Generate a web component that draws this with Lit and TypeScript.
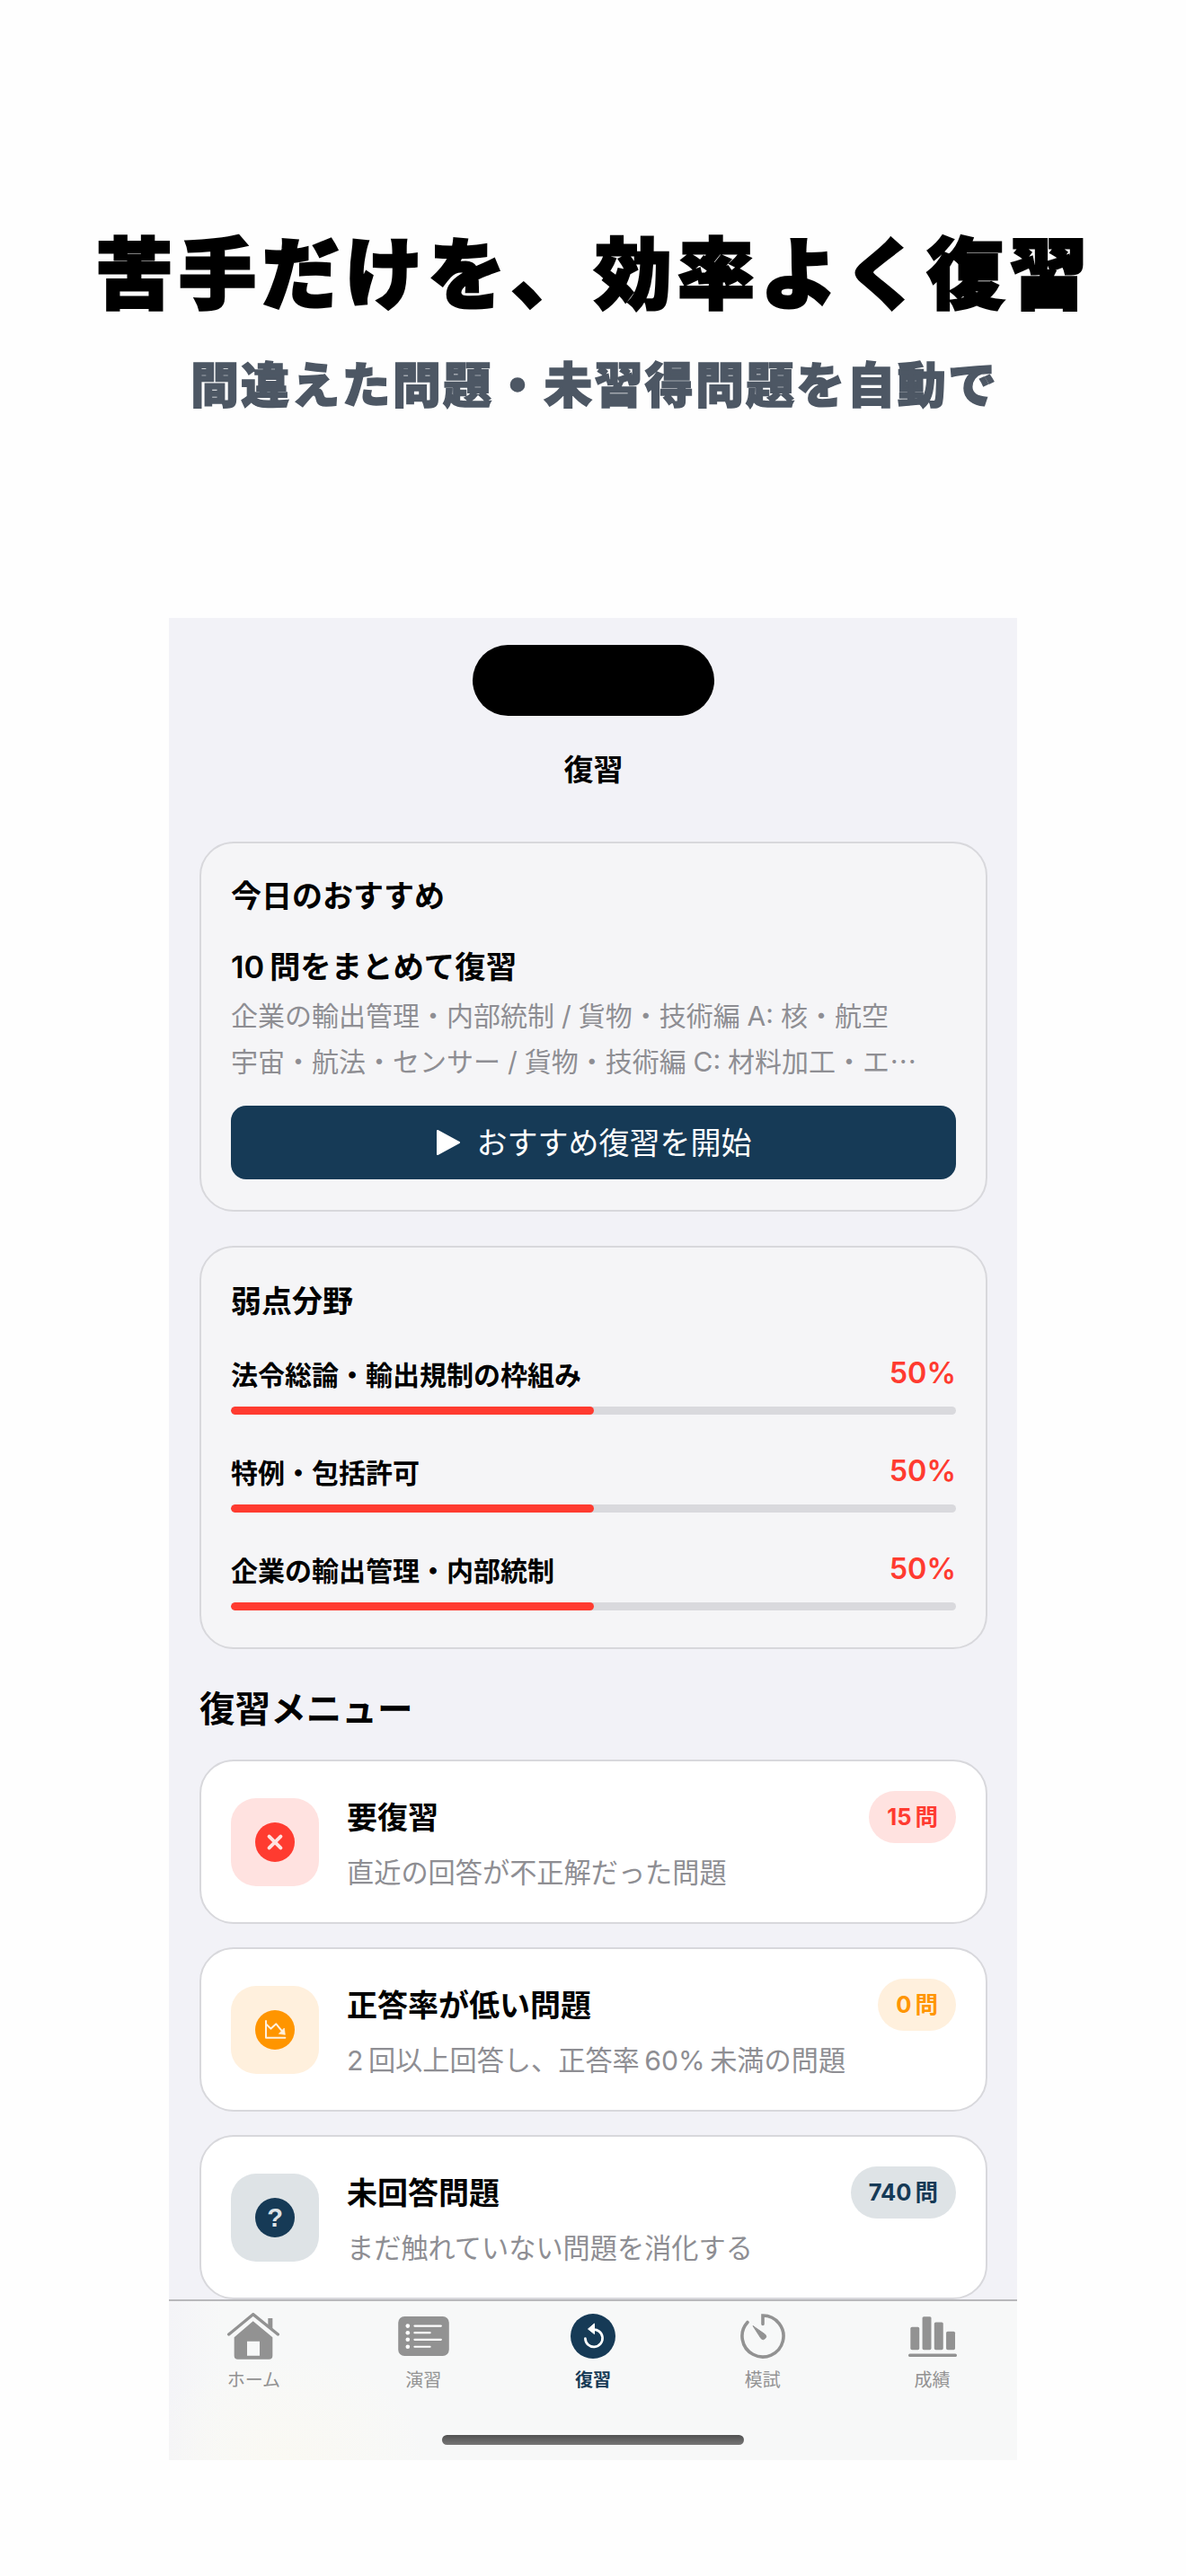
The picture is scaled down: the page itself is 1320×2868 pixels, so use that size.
import { LitElement, html, css, svg } from "lit";
import { customElement } from "lit/decorators.js";

const weak = [
  { name: "法令総論・輸出規制の枠組み", pct: 50 },
  { name: "特例・包括許可", pct: 50 },
  { name: "企業の輸出管理・内部統制", pct: 50 },
];

const homeIcon = html`<svg class="i-home" viewBox="67 15 174 156" aria-hidden="true">
  <path d="M203 33 h15 v42 l-15 -13z" fill="currentColor"/>
  <path d="M72 87 L153 20 L236 87" fill="none" stroke="currentColor" stroke-width="10" stroke-linecap="round" stroke-linejoin="round"/>
  <path fill-rule="evenodd" fill="currentColor" d="M153 43 L218 97 V158 Q218 170 206 170 H102 Q90 170 90 158 V97 Z M133 110 V158 H175 V110 Z"/>
</svg>`;

const listIcon = html`<svg class="i-list" viewBox="636 25 171 133" aria-hidden="true">
  <rect x="636" y="25" width="171" height="133" rx="21" fill="currentColor"/>
  <g fill="#fff"><circle cx="668" cy="57" r="7"/><circle cx="668" cy="80" r="7"/><circle cx="668" cy="103" r="7"/><circle cx="668" cy="127" r="7"/></g>
  <g stroke="#fff" stroke-width="6.5" stroke-linecap="round"><path d="M691 57H780M691 80H743M691 103H780M691 127H743"/></g>
</svg>`;

const reviewIcon = html`<svg class="i-round" viewBox="-25 -25 50 50" aria-hidden="true">
  <circle r="25" fill="currentColor"/>
  <path d="M-1.5 -8.2 A9.6 9.6 0 1 1 -9.6 1.6" transform="translate(1 1)" fill="none" stroke="#fff" stroke-width="2.7" stroke-linecap="round"/>
  <path d="M1.5 -14 L-5.5 -8 L1.5 -2.4 Z" fill="#fff" stroke="#fff" stroke-width="1" stroke-linejoin="round"/>
</svg>`;

const timerIcon = html`<svg class="i-round" viewBox="-25 -25 50 50" aria-hidden="true">
  <path d="M0 -13.5 V-23 A23 23 0 1 1 -17 -15.5" fill="none" stroke="currentColor" stroke-width="3.6" stroke-linecap="round"/>
  <path d="M-11 -11.5 L2.6 -2 A2.9 2.9 0 0 1 -2 2.6 Z" fill="currentColor" stroke="currentColor" stroke-width="1" stroke-linejoin="round"/>
</svg>`;

const chartIcon = html`<svg class="i-chart" viewBox="1200 25 163 135" aria-hidden="true">
  <g fill="currentColor">
    <rect x="1207" y="60" width="30" height="77" rx="5"/>
    <rect x="1247" y="25" width="30" height="112" rx="5"/>
    <rect x="1287" y="44" width="30" height="93" rx="5"/>
    <rect x="1327" y="75" width="30" height="62" rx="5"/>
    <rect x="1200" y="150" width="163" height="10.5" rx="5"/>
  </g>
</svg>`;

const crossGlyph = svg`<path d="M-6.4 -6.4 L6.4 6.4 M6.4 -6.4 L-6.4 6.4" stroke="#ffe2e0" stroke-width="4" stroke-linecap="round"/>`;

const trendGlyph = svg`<g transform="translate(-22 -22) scale(.3333)">
  <path d="M36 36 V92 H100" fill="none" stroke="#fff0dd" stroke-width="6" stroke-linecap="round" stroke-linejoin="round"/>
  <path d="M38 48 L52 62 L70 46 L88 68" fill="none" stroke="#fff0dd" stroke-width="6" stroke-linecap="round" stroke-linejoin="round"/>
  <path d="M100 82 L79 79 L97 60 Z" fill="#fff0dd" stroke="#fff0dd" stroke-width="2" stroke-linejoin="round"/>
</g>`;

const menu = [
  { tone: "red", title: "要復習", sub: "直近の回答が不正解だった問題", badge: "15\u2009問", glyph: crossGlyph },
  { tone: "orange", title: "正答率が低い問題", sub: "2\u2009回以上回答し、正答率\u200960%\u2009未満の問題", badge: "0\u2009問", glyph: trendGlyph },
  { tone: "navy", title: "未回答問題", sub: "まだ触れていない問題を消化する", badge: "740\u2009問", glyph: null },
];

const tabs = [
  { label: "ホーム", icon: homeIcon, active: false },
  { label: "演習", icon: listIcon, active: false },
  { label: "復習", icon: reviewIcon, active: true },
  { label: "模試", icon: timerIcon, active: false },
  { label: "成績", icon: chartIcon, active: false },
];

@customElement("app-root")
export class AppRoot extends LitElement {
  static styles = css`
    :host {
      display: block;
      width: 1320px;
      height: 2868px;
      background: #fefefe;
      overflow: hidden;
      font-family: Inter, "Noto Sans CJK JP", sans-serif;
      color: #000;
    }
    * { box-sizing: border-box; }
    .hero { height: 688px; padding: 250px 0 0 3px; text-align: center; }
    .hero h1 {
      margin: 0;
      font: 900 86px/100px "Noto Sans CJK JP", sans-serif;
      letter-spacing: 6.5px;
      -webkit-text-stroke: 3px #000;
      white-space: nowrap;
    }
    .hero p {
      margin: 41px 0 0;
      font: 900 54px/70px "Noto Sans CJK JP", sans-serif;
      letter-spacing: 2.2px;
      color: #4d5764;
      -webkit-text-stroke: 1.5px #4d5764;
      white-space: nowrap;
    }
    .phone {
      width: 944px;
      height: 2051px;
      margin: 0 auto;
      background: #f2f2f7;
      display: flex;
      flex-direction: column;
      overflow: hidden;
    }
    .scroll { flex: 1; min-height: 0; overflow: hidden; padding: 30px 33px 0 34px; }
    .island { width: 269px; height: 79px; border-radius: 40px; background: #000; margin: 0 auto; }
    .navtitle { margin: 32px 0 0; height: 56px; font-size: 33px; line-height: 56px; font-weight: 600; text-align: center; }
    .card {
      margin-top: 38px;
      background: #f5f5f7;
      border: 2px solid #d8d8dc;
      border-radius: 38px;
      padding: 33px;
    }
    .card.rec { margin-top: 52px; }
    .card-h { height: 52px; font-size: 34px; line-height: 52px; font-weight: 600; }
    .rec-title { margin-top: 27px; height: 52px; font-size: 34.4px; line-height: 52px; font-weight: 600; }
    .rec-desc { margin-top: 4px; color: #8e8e93; font-size: 30px; line-height: 49px; word-spacing: -0.5px; }
    .rec-desc span { display: block; white-space: nowrap; }
    .rec-desc i { font-style: normal; font-family: "Noto Sans CJK JP", sans-serif; letter-spacing: -6px; }
    .cta {
      margin-top: 24px;
      height: 82px;
      border-radius: 17px;
      background: #163a56;
      color: #fff;
      display: flex;
      align-items: center;
      justify-content: center;
      gap: 18px;
      font-size: 34px;
      margin-bottom: 1px;
    }
    .cta svg { width: 28px; height: 30px; flex: none; }
    .cta span { padding-bottom: 3px; }
    .weak { padding-bottom: 41px; }
    .weak .card-h { height: 54px; line-height: 54px; }
    .row { margin-top: 43px; }
    .card-h + .row { margin-top: 33px; }
    .row-top { display: flex; justify-content: space-between; align-items: center; height: 44px; padding-bottom: 5px; font-size: 30px; font-weight: 600; }
    .pct { color: #ff3b30; font-size: 32.4px; font-weight: 600; }
    .track { margin-top: 13px; height: 9px; border-radius: 4.5px; background: #d9d9dd; overflow: hidden; }
    .fill { height: 100%; border-radius: 4.5px; background: #ff3b30; }
    .section { margin: 37px 0 26px; height: 60px; font-size: 39.6px; line-height: 60px; font-weight: 700; }
    .item {
      display: flex;
      align-items: center;
      gap: 31px;
      height: 183px;
      padding: 33px;
      margin-bottom: 26px;
      background: #fff;
      border: 2px solid #d8d8dc;
      border-radius: 38px;
    }
    .tile { width: 98px; height: 98px; flex: none; border-radius: 28px; display: flex; align-items: center; justify-content: center; }
    .dot { width: 44px; height: 44px; display: block; }
    .q { width: 44px; height: 44px; border-radius: 50%; display: flex; align-items: center; justify-content: center; font: 700 29px/44px "Liberation Sans", sans-serif; }
    .tile.red { background: #ffe2e0; color: #ff3b30; }
    .tile.orange { background: #fff0dd; color: #ff9500; }
    .tile.navy { background: #dee3e6; color: #163a56; }
    .tile.navy .q { background: #163a56; color: #dee3e6; }
    .txt { flex: 1; min-width: 0; align-self: stretch; display: flex; flex-direction: column; }
    .txt b { height: 60px; font-size: 34px; line-height: 60px; font-weight: 700; }
    .txt span { margin-top: 9px; height: 44px; font-size: 30.2px; line-height: 44px; color: #8e8e93; white-space: nowrap; }
    .badge {
      align-self: flex-start;
      height: 58px;
      padding: 0 20px;
      border-radius: 29px;
      font-size: 25.5px;
      font-weight: 700;
      line-height: 58px;
      white-space: nowrap;
    }
    .badge.red { background: #ffe2e0; color: #ff3b30; }
    .badge.orange { background: #fff0dd; color: #ff9500; }
    .badge.navy { background: #dee3e6; color: #163a56; }
    .tabbar {
      height: 179px;
      flex: none;
      border-top: 2px solid #b8b8bb;
      background:
        radial-gradient(ellipse 160px 120px at 130px 100%, #faf9f3, transparent),
        linear-gradient(90deg, #f4f4f7 0, #f7f8f8 60px, #f7f8f8 100%);
      display: flex;
      flex-direction: column;
    }
    .tabs { display: grid; grid-template-columns: repeat(5, 1fr); padding-top: 13px; }
    .tab { display: flex; flex-direction: column; align-items: center; color: #929292; }
    .tab.active { color: #163a56; }
    .slot { height: 52px; display: flex; align-items: center; justify-content: center; }
    .i-home { width: 58px; height: 52px; display: block; }
    .i-list { width: 57px; height: 44px; display: block; }
    .i-round { width: 50px; height: 50px; display: block; }
    .i-chart { width: 54px; height: 45px; display: block; }
    .tab-l { margin-top: 10px; height: 26px; font-size: 20px; line-height: 26px; }
    .tab.active .tab-l { font-weight: 600; }
    .indicator {
      width: 336px;
      height: 11px;
      border-radius: 6px;
      margin: auto auto 17px;
      background: linear-gradient(#505050, #777);
    }
  `;

  render() {
    return html`
      <section class="hero">
        <h1>苦手だけを、効率よく復習</h1>
        <p>間違えた問題・未習得問題を自動で</p>
      </section>
      <div class="phone">
        <div class="scroll">
          <div class="island"></div>
          <div class="navtitle">復習</div>
          <div class="card rec">
            <div class="card-h">今日のおすすめ</div>
            <div class="rec-title">10\u2009問をまとめて復習</div>
            <div class="rec-desc">
              <span>企業の輸出管理・内部統制 / 貨物・技術編 A: 核・航空</span>
              <span>宇宙・航法・センサー / 貨物・技術編 C: 材料加工・エ<i>…</i></span>
            </div>
            <div class="cta">
              <svg viewBox="0 0 28 30" aria-hidden="true"><path d="M2 2 L26 15 L2 28 Z" fill="#fff" stroke="#fff" stroke-width="2" stroke-linejoin="round"/></svg>
              <span>おすすめ復習を開始</span>
            </div>
          </div>
          <div class="card weak">
            <div class="card-h">弱点分野</div>
            ${weak.map(
              (w) => html`<div class="row">
                <div class="row-top"><span>${w.name}</span><span class="pct">${w.pct}%</span></div>
                <div class="track"><div class="fill" style="width:${w.pct}%"></div></div>
              </div>`
            )}
          </div>
          <div class="section">復習メニュー</div>
          ${menu.map(
            (m) => html`<div class="item">
              <div class="tile ${m.tone}">
                ${m.glyph
                  ? html`<svg class="dot" viewBox="-22 -22 44 44" aria-hidden="true"><circle r="22" fill="currentColor"/>${m.glyph}</svg>`
                  : html`<span class="q">?</span>`}
              </div>
              <div class="txt"><b>${m.title}</b><span>${m.sub}</span></div>
              <div class="badge ${m.tone}">${m.badge}</div>
            </div>`
          )}
        </div>
        <div class="tabbar">
          <div class="tabs">
            ${tabs.map(
              (t) => html`<div class="tab ${t.active ? "active" : ""}">
                <div class="slot">${t.icon}</div>
                <div class="tab-l">${t.label}</div>
              </div>`
            )}
          </div>
          <div class="indicator"></div>
        </div>
      </div>
    `;
  }
}
